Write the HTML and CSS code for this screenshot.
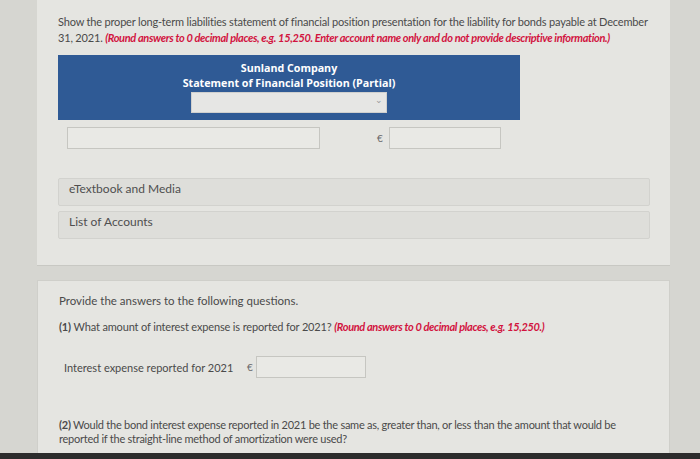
FILE: index.html
```html
<!DOCTYPE html>
<html>
<head>
<meta charset="utf-8">
<link rel="stylesheet" href="styles.css">
</head>
<body>
<div class="page">
  <section class="panel panel-top">
    <p class="question">Show the proper long-term liabilities statement of financial position presentation for the liability for bonds payable at December 31, 2021. <em class="note">(Round answers to 0 decimal places, e.g. 15,250. Enter account name only and do not provide descriptive information.)</em></p>
    <div class="statement">
      <div class="statement-head">
        <div class="company">Sunland Company</div>
        <div class="title">Statement of Financial Position (Partial)</div>
        <div class="select"><span class="chev">&#8964;</span></div>
      </div>
      <div class="row">
        <div class="input input-name"></div>
        <span class="cur">€</span>
        <div class="input input-amt"></div>
      </div>
    </div>
    <div class="bar bar-first">eTextbook and Media</div>
    <div class="bar">List of Accounts</div>
  </section>
  <section class="panel panel-bottom">
    <p class="para p-provide">Provide the answers to the following questions.</p>
    <p class="para p-q1"><span class="num">(1)</span> What amount of interest expense is reported for 2021? <em class="note">(Round answers to 0 decimal places, e.g. 15,250.)</em></p>
    <div class="ie-row">
      <span class="ie-label">Interest expense reported for 2021</span>
      <span class="cur">€</span>
      <div class="input input-ie"></div>
    </div>
    <p class="para p-q2"><span class="num">(2)</span> Would the bond interest expense reported in 2021 be the same as, greater than, or less than the amount that would be reported if the straight-line method of amortization were used?</p>
  </section>
</div>
<div class="screen-edge"></div>
</body>
</html>
```
FILE: styles.css
```css
html, body {
  margin: 0;
  padding: 0;
}
body {
  width: 700px;
  height: 459px;
  overflow: hidden;
  background: #d6d6d1;
  font-family: Lato, "Open Sans", sans-serif;
  color: #4a4a4a;
}
.page {
  display: flex;
  flex-direction: column;
  gap: 14px;
  padding: 0 30px 0 37px;
  height: 453px;
  box-sizing: border-box;
}
.panel {
  background: #e5e5e1;
  box-sizing: border-box;
  padding: 0 20px 0 21px;
}
.panel-top {
  height: 266px;
  border-bottom: 1px solid #c8c8c3;
  padding-top: 14px;
}
.panel-bottom {
  flex: 1;
  border: 1px solid #cfcfca;
  border-bottom: none;
  padding-top: 12px;
}
.question {
  margin: 0;
  font-size: 11px;
  line-height: 16px;
  letter-spacing: -0.18px;
}
.note {
  color: #d2133e;
  font-weight: bold;
  font-style: italic;
  letter-spacing: -0.35px;
}
.statement {
  margin-top: 9px;
}
.statement-head {
  width: 462px;
  height: 65px;
  box-sizing: border-box;
  background: #2f5a95;
  color: #fff;
  display: flex;
  flex-direction: column;
  align-items: center;
  padding-top: 6px;
  font-family: "Open Sans", sans-serif;
  font-weight: bold;
  font-size: 10.7px;
  line-height: 15px;
}
.select {
  margin-top: 1px;
  width: 196px;
  height: 21px;
  background: #e6e6e4;
  border: 1px solid #d0d0ce;
  box-sizing: border-box;
  position: relative;
}
.chev {
  position: absolute;
  right: 3px;
  top: 0;
  color: #9a9a9a;
  font-size: 9px;
  font-weight: normal;
  line-height: 14px;
}
.row {
  display: flex;
  align-items: center;
  margin-top: 7px;
  height: 22px;
}
.input {
  background: #e9e9e5;
  border: 1px solid #c6c6c1;
  box-sizing: border-box;
  height: 22px;
}
.input-name {
  width: 253px;
  margin-left: 9px;
}
.cur {
  font-size: 10px;
  color: #6a6a6a;
}
.row .cur {
  margin-left: 57px;
  width: 12px;
}
.input-amt {
  width: 112px;
}
.bar {
  margin-top: 5px;
  height: 28px;
  box-sizing: border-box;
  background: #dededa;
  border: 1px solid #d2d2ce;
  border-radius: 2px;
  padding-left: 10px;
  font-size: 12px;
  line-height: 20px;
  color: #4f4f4f;
}
.bar-first {
  margin-top: 29px;
}
.para {
  margin: 0;
  font-size: 11px;
  line-height: 13.5px;
  letter-spacing: -0.15px;
}
.p-provide {
  margin-top: 1px;
  font-size: 11.5px;
  letter-spacing: 0;
}
.p-q1 {
  margin-top: 12px;
}
.num {
  font-weight: bold;
}
.ie-row {
  display: flex;
  align-items: center;
  margin-top: 23px;
  padding-left: 5px;
  height: 22px;
}
.ie-label {
  font-size: 11px;
  width: 183px;
}
.ie-row .cur {
  width: 9px;
}
.input-ie {
  width: 110px;
}
.p-q2 {
  margin-top: 40px;
  padding-right: 30px;
  letter-spacing: -0.25px;
}
.screen-edge {
  height: 6px;
  background: #2c2c2c;
}
```
